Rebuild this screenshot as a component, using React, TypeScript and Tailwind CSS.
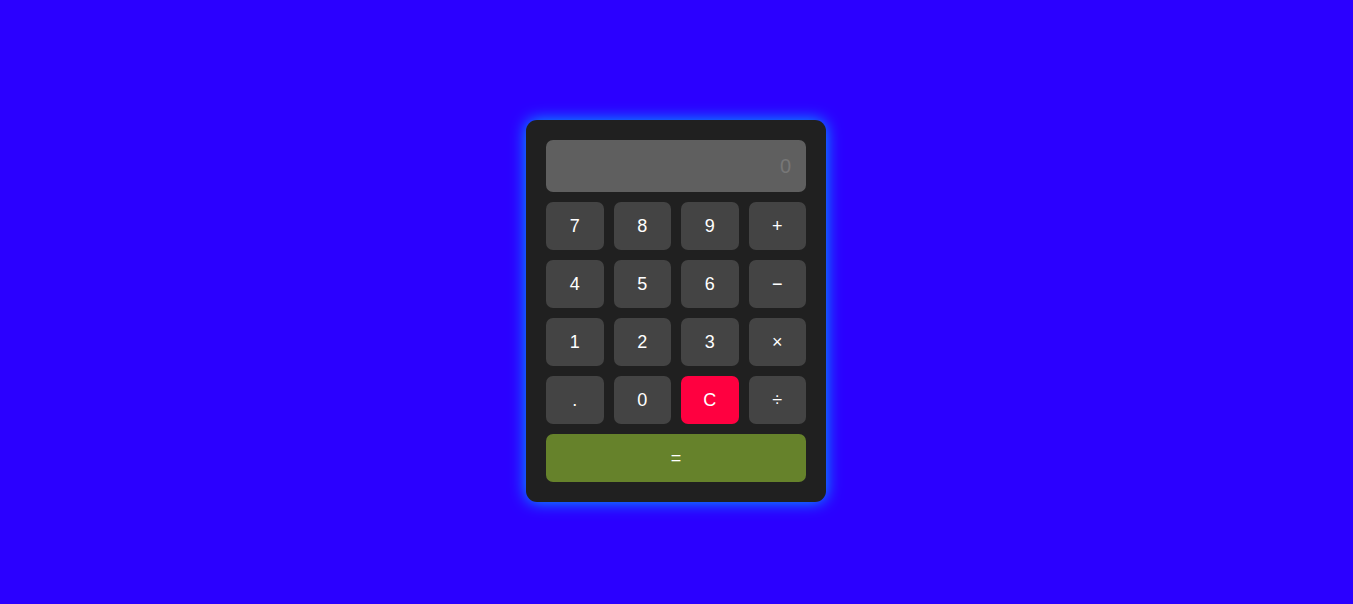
import React from "react";

const keys: { label: string; cls: string }[] = [
  { label: "7", cls: "bg-[#444444]" },
  { label: "8", cls: "bg-[#444444]" },
  { label: "9", cls: "bg-[#444444]" },
  { label: "+", cls: "bg-[#444444]" },
  { label: "4", cls: "bg-[#444444]" },
  { label: "5", cls: "bg-[#444444]" },
  { label: "6", cls: "bg-[#444444]" },
  { label: "−", cls: "bg-[#444444]" },
  { label: "1", cls: "bg-[#444444]" },
  { label: "2", cls: "bg-[#444444]" },
  { label: "3", cls: "bg-[#444444]" },
  { label: "×", cls: "bg-[#444444]" },
  { label: ".", cls: "bg-[#444444]" },
  { label: "0", cls: "bg-[#444444]" },
  { label: "C", cls: "bg-[#ff0040]" },
  { label: "÷", cls: "bg-[#444444]" },
];

export default function App() {
  return (
    <div
      className="w-full h-[604px] bg-[#2b00ff] flex items-start justify-center pt-[120px] pr-px"
      style={{ fontFamily: '"Liberation Sans", Arial, sans-serif' }}
    >
      <div className="w-[300px] bg-[#202020] rounded-[11px] p-5 shadow-[0_0_16px_#00aaff] flex flex-col gap-[10px]">
        <div className="h-[52px] bg-[#5f5f5f] rounded-[7px] flex items-center justify-end pr-[15px] text-[20px] text-[#777777]">
          0
        </div>
        <div className="grid grid-cols-4 gap-[10px]">
          {keys.map((k) => (
            <button
              key={k.label}
              className={`h-12 rounded-[7px] ${k.cls} text-white text-[18px] flex items-center justify-center`}
            >
              {k.label}
            </button>
          ))}
        </div>
        <button className="h-12 rounded-[7px] bg-[#66822b] text-white text-[18px] flex items-center justify-center">
          =
        </button>
      </div>
    </div>
  );
}
